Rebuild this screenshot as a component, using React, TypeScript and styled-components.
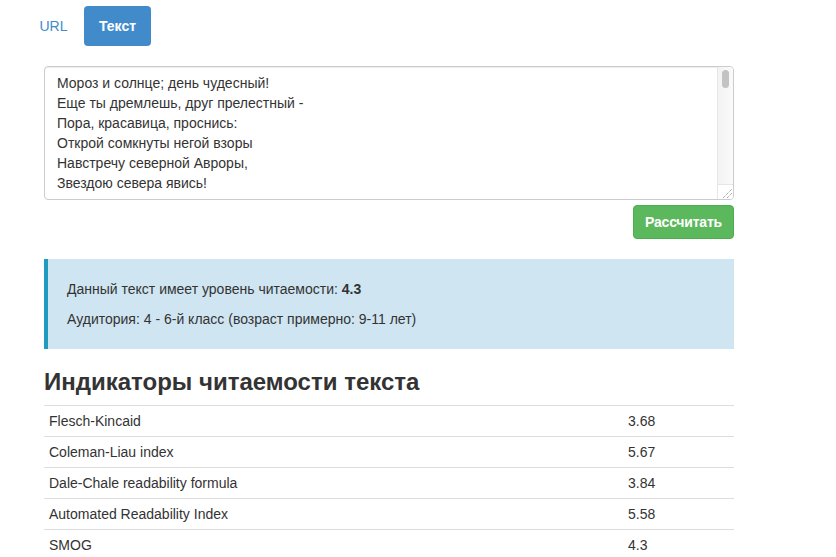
import React from "react";
import styled, { createGlobalStyle } from "styled-components";

const GlobalStyle = createGlobalStyle`
  html, body { margin: 0; padding: 0; background: #fff; }
  body {
    font-family: "Liberation Sans", Arial, Helvetica, sans-serif;
    font-size: 14px;
    line-height: 20px;
    color: #333;
  }
  * { box-sizing: border-box; }
`;

const Page = styled.div`
  width: 836px;
  padding: 6px 0 0 0;
`;

const Pills = styled.ul`
  list-style: none;
  margin: 0;
  padding: 0 0 0 25px;
  display: flex;
  gap: 2px;
`;

const Pill = styled.li<{ $active?: boolean }>`
  display: block;
  padding: 10px 0;
  width: ${(p) => (p.$active ? "67px" : "57px")};
  text-align: center;
  line-height: 20px;
  border-radius: 4px;
  font-size: 14px;
  color: ${(p) => (p.$active ? "#fff" : "#428bca")};
  background: ${(p) => (p.$active ? "#428bca" : "transparent")};
  font-weight: ${(p) => (p.$active ? "bold" : "normal")};
  cursor: pointer;
`;

const Content = styled.div`
  width: 690px;
  margin: 20px 0 0 44px;
`;

const FieldWrap = styled.div`
  position: relative;
  width: 690px;
  height: 134px;
`;

const TextArea = styled.textarea`
  display: block;
  width: 690px;
  height: 134px;
  padding: 6px 20px 6px 12px;
  border: 1px solid #ccc;
  border-radius: 4px;
  font-family: "Liberation Sans", Arial, Helvetica, sans-serif;
  font-size: 14px;
  line-height: 20px;
  color: #333;
  resize: none;
  outline: none;
  box-shadow: inset 0 1px 1px rgba(0, 0, 0, 0.075);
  overflow-y: auto;
`;

const ScrollTrack = styled.div`
  position: absolute;
  top: 1px;
  right: 1px;
  width: 16px;
  height: 117px;
  background: linear-gradient(to right, #f3f3f3, #fafafa);
  border-left: 1px solid #e6e6e6;
  border-top-right-radius: 3px;
  display: flex;
  justify-content: center;
  padding-top: 3px;
`;

const ScrollThumb = styled.div`
  width: 7px;
  height: 18px;
  border-radius: 4px;
  background: #c3c3c3;
`;

const ResizeCorner = styled.div`
  position: absolute;
  right: 1px;
  bottom: 1px;
  width: 16px;
  height: 15px;
  background: #fff;
  border-left: 1px solid #e6e6e6;
  border-top: 1px solid #e6e6e6;
  border-bottom-right-radius: 3px;
  display: flex;
  align-items: flex-end;
  justify-content: flex-end;
`;

const ButtonRow = styled.div`
  display: flex;
  justify-content: flex-end;
  margin-top: 5px;
`;

const Button = styled.button`
  height: 34px;
  width: 101px;
  padding: 6px 0;
  border: 1px solid #4cae4c;
  border-radius: 4px;
  background: #5cb85c;
  color: #fff;
  font-family: "Liberation Sans", Arial, Helvetica, sans-serif;
  font-size: 14px;
  font-weight: bold;
  line-height: 20px;
  letter-spacing: -0.2px;
  cursor: pointer;
`;

const Callout = styled.div`
  margin-top: 20px;
  padding: 20px 20px 20px 19px;
  background: #cfe5f2;
  border-left: 4px solid #1f9bbf;
`;

const CalloutP = styled.p<{ $last?: boolean }>`
  margin: 0 0 ${(p) => (p.$last ? "0" : "10px")} 0;
  font-size: 14px;
  line-height: 20px;
`;

const Heading = styled.h3`
  margin: 20px 0 10px 0;
  font-size: 24px;
  line-height: 26px;
  font-weight: bold;
  font-family: "Liberation Sans", Arial, Helvetica, sans-serif;
  color: #333;
`;

const Table = styled.table`
  width: 690px;
  border-collapse: collapse;
  border-spacing: 0;
`;

const Cell = styled.td<{ $value?: boolean }>`
  padding: 5px;
  line-height: 20px;
  border-top: 1px solid #ddd;
  vertical-align: top;
  width: ${(p) => (p.$value ? "111px" : "auto")};
`;

const poem = [
  "Мороз и солнце; день чудесный!",
  "Еще ты дремлешь, друг прелестный -",
  "Пора, красавица, проснись:",
  "Открой сомкнуты негой взоры",
  "Навстречу северной Авроры,",
  "Звездою севера явись!",
  "",
  "Вечор, ты помнишь, вьюга злилась,",
  "На мутном небе мгла носилась;",
  "Луна, как бледное пятно,",
  "Сквозь тучи мрачные желтела,",
  "И ты печальная сидела -",
  "А нынче... погляди в окно:",
  "",
  "Под голубыми небесами",
  "Великолепными коврами,",
  "Блестя на солнце, снег лежит;",
  "Прозрачный лес один чернеет,",
  "И ель сквозь иней зеленеет,",
  "И речка подо льдом блестит.",
  "",
  "Вся комната янтарным блеском",
  "Озарена. Веселым треском",
  "Трещит затопленная печь.",
  "Приятно думать у лежанки.",
  "Но знаешь: не велеть ли в санки",
  "Кобылку бурую запречь?",
  "",
  "Скользя по утреннему снегу,",
  "Друг милый, предадимся бегу",
  "Нетерпеливого коня",
  "И навестим поля пустые,",
  "Леса, недавно столь густые,",
  "И берег, милый для меня.",
].join("\n");

const rows: [string, string][] = [
  ["Flesch-Kincaid", "3.68"],
  ["Coleman-Liau index", "5.67"],
  ["Dale-Chale readability formula", "3.84"],
  ["Automated Readability Index", "5.58"],
  ["SMOG", "4.3"],
];

function Grip() {
  return (
    <svg width="12" height="12" viewBox="0 0 12 12">
      <line x1="2" y1="11" x2="11" y2="2" stroke="#888" strokeWidth="1" strokeDasharray="1 1" />
      <line x1="6" y1="11" x2="11" y2="6" stroke="#888" strokeWidth="1" strokeDasharray="1 1" />
    </svg>
  );
}

export default function App() {
  return (
    <Page>
      <GlobalStyle />
      <Pills>
        <Pill>URL</Pill>
        <Pill $active>Текст</Pill>
      </Pills>
      <Content>
        <FieldWrap>
          <TextArea defaultValue={poem} />
          <ScrollTrack>
            <ScrollThumb />
          </ScrollTrack>
          <ResizeCorner>
            <Grip />
          </ResizeCorner>
        </FieldWrap>
        <ButtonRow>
          <Button>Рассчитать</Button>
        </ButtonRow>
        <Callout>
          <CalloutP>
            Данный текст имеет уровень читаемости: <b>4.3</b>
          </CalloutP>
          <CalloutP $last>
            Аудитория: 4 - 6-й класс (возраст примерно: 9-11 лет)
          </CalloutP>
        </Callout>
        <Heading>Индикаторы читаемости текста</Heading>
        <Table>
          <tbody>
            {rows.map(([name, value]) => (
              <tr key={name}>
                <Cell>{name}</Cell>
                <Cell $value>{value}</Cell>
              </tr>
            ))}
          </tbody>
        </Table>
      </Content>
    </Page>
  );
}
